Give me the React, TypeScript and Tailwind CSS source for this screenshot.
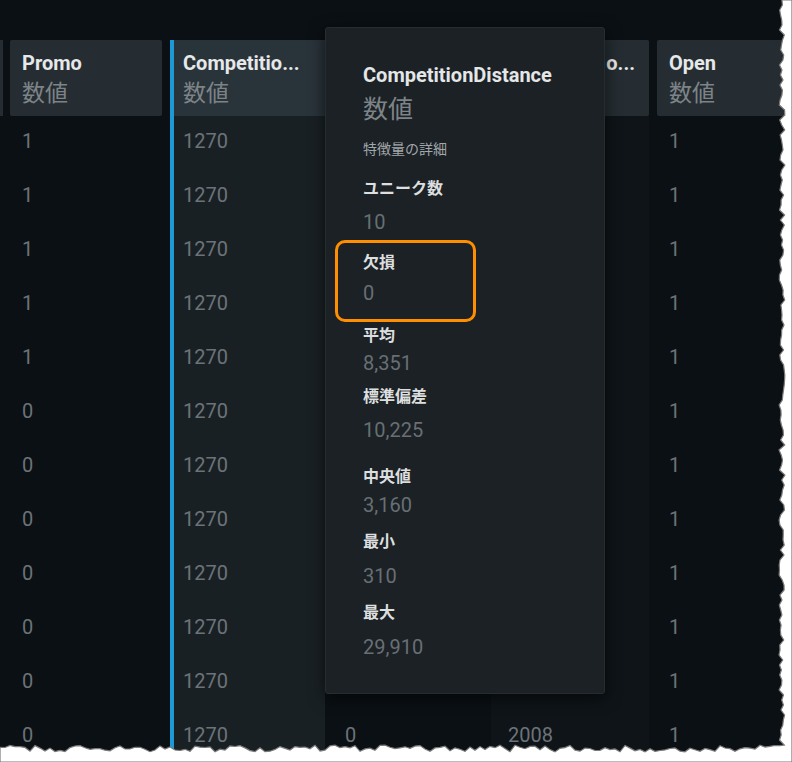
import React from "react";

const rowsPromo = ["1", "1", "1", "1", "1", "0", "0", "0", "0", "0", "0", "0"];

function tornPath(): string {
  const pts: string[] = [];
  pts.push("792,0");
  let seed = 7;
  const rnd = () => {
    seed = (seed * 9301 + 49297) % 233280;
    return seed / 233280;
  };
  for (let y = 0; y <= 748; y += 5) {
    const x = 779 + rnd() * 6;
    pts.push(`${x.toFixed(1)},${y}`);
  }
  for (let x = 780; x >= 0; x -= 5) {
    const y = 745 + rnd() * 7;
    pts.push(`${x},${y.toFixed(1)}`);
  }
  pts.push("0,762");
  pts.push("792,762");
  return "M" + pts.join(" L") + " Z";
}

const font = { fontFamily: "Roboto, 'Noto Sans CJK JP', sans-serif" };

function Header({ title, w, bg = "bg-[#252d32]" }: { title: string; w: string; bg?: string }) {
  return (
    <div className={`${w} h-[76px] ${bg} rounded-[2px] pl-[12px] pt-[10px] shrink-0`}>
      <div className="text-[20px] leading-[26px] font-bold text-[#e6e8e9] whitespace-nowrap overflow-hidden">{title}</div>
      <div className="text-[23px] leading-[30px] text-[#7d8488] mt-[3px]">数値</div>
    </div>
  );
}

function Cells({ values }: { values: string[] }) {
  return (
    <div className="flex flex-col">
      {values.map((v, i) => (
        <div key={i} className="h-[54px] pl-[12px] pt-[13px] text-[20px] leading-[24px] text-[#6c7378]">
          {v}
        </div>
      ))}
    </div>
  );
}

function Stat({ label, value, mt, gap }: { label: string; value: string; mt: string; gap: string }) {
  return (
    <div className={mt}>
      <div className="text-[16px] leading-[22px] font-bold text-[#dcdedf]">{label}</div>
      <div className={`${gap} text-[20px] leading-[24px] text-[#686f74]`}>{value}</div>
    </div>
  );
}

export default function App() {
  const comp = Array(12).fill("1270");
  const hidden = ["", "", "", "", "", "", "", "", "", "", "", "0"];
  const col4 = ["", "", "", "", "", "", "", "", "", "", "", "2008"];
  const open = Array(12).fill("1");
  return (
    <div className="relative w-[792px] h-[762px] bg-[#0b1014] overflow-hidden" style={font}>
      <div className="flex pt-[40px]">
        {/* stub column */}
        <div className="w-[3px] shrink-0">
          <div className="h-[76px] bg-[#252d32]" />
        </div>
        <div className="w-[7px] shrink-0" />
        {/* Promo */}
        <div className="w-[152px] shrink-0 flex flex-col">
          <Header title="Promo" w="w-[152px]" />
          <Cells values={rowsPromo} />
        </div>
        <div className="w-[8px] shrink-0" />
        {/* Competition */}
        <div className="w-[155px] shrink-0 flex">
          <div className="w-[4px] h-[730px] bg-[#1d9ad6] shrink-0" />
          <div className="w-[151px] flex flex-col bg-[#192024] h-[730px]">
            <div className="w-[151px] h-[76px] shrink-0 bg-[#29333a] pl-[9px] pt-[10px]">
              <div className="text-[20px] leading-[26px] font-bold text-[#e6e8e9] whitespace-nowrap">Competitio...</div>
              <div className="text-[23px] leading-[30px] text-[#7d8488] mt-[3px]">数値</div>
            </div>
            <div className="-ml-[3px]">
              <Cells values={comp} />
            </div>
          </div>
        </div>
        <div className="w-[8px] shrink-0" />
        {/* hidden column (under popover) */}
        <div className="w-[150px] shrink-0 flex flex-col">
          <div className="w-[150px] h-[76px] shrink-0 bg-[#252d32] rounded-[2px]" />
          <Cells values={hidden} />
        </div>
        <div className="w-[8px] shrink-0" />
        {/* col4 */}
        <div className="w-[158px] shrink-0 flex flex-col bg-[#0e1418]">
          <div className="w-[158px] h-[76px] shrink-0 bg-[#252d32] rounded-[2px] pt-[10px] flex justify-end pr-[14px]">
            <div className="text-[20px] leading-[26px] font-bold text-[#e6e8e9]">o...</div>
          </div>
          <div className="pl-[5px]">
            <Cells values={col4} />
          </div>
        </div>
        <div className="w-[8px] shrink-0" />
        {/* Open */}
        <div className="w-[140px] shrink-0 flex flex-col">
          <Header title="Open" w="w-[140px]" />
          <Cells values={open} />
        </div>
      </div>

      {/* Popover */}
      <div className="absolute left-[325px] top-[27px] w-[280px] h-[667px] bg-[#1b2125] border border-[#262d31] rounded-[3px] shadow-[0_4px_16px_rgba(0,0,0,0.6)] pl-[37px] pt-[33px]">
        <div className="text-[20px] leading-[28px] font-bold text-[#e4e6e7] whitespace-nowrap">CompetitionDistance</div>
        <div className="text-[25px] leading-[32px] text-[#7d8488] mt-[5px]">数値</div>
        <div className="text-[14px] leading-[20px] text-[#a2a7aa] mt-[13px]">特徴量の詳細</div>
        <Stat label="ユニーク数" value="10" mt="mt-[19px]" gap="mt-[10px]" />
        <Stat label="欠損" value="0" mt="mt-[18px]" gap="mt-[7px]" />
        <Stat label="平均" value="8,351" mt="mt-[20px]" gap="mt-[4px]" />
        <Stat label="標準偏差" value="10,225" mt="mt-[11px]" gap="mt-[10px]" />
        <Stat label="中央値" value="3,160" mt="mt-[24px]" gap="mt-[5px]" />
        <Stat label="最小" value="310" mt="mt-[14px]" gap="mt-[11px]" />
        <Stat label="最大" value="29,910" mt="mt-[14px]" gap="mt-[11px]" />
      </div>

      {/* Orange highlight */}
      <div className="absolute left-[335px] top-[240px] w-[141px] h-[82px] border-[3px] border-[#ff8f00] rounded-[10px]" />

      {/* torn edge */}
      <svg className="absolute left-0 top-0" width="792" height="762" viewBox="0 0 792 762">
        <path d={tornPath()} fill="#ffffff" stroke="#7a7a7a" strokeWidth="1.2" />
      </svg>
    </div>
  );
}
